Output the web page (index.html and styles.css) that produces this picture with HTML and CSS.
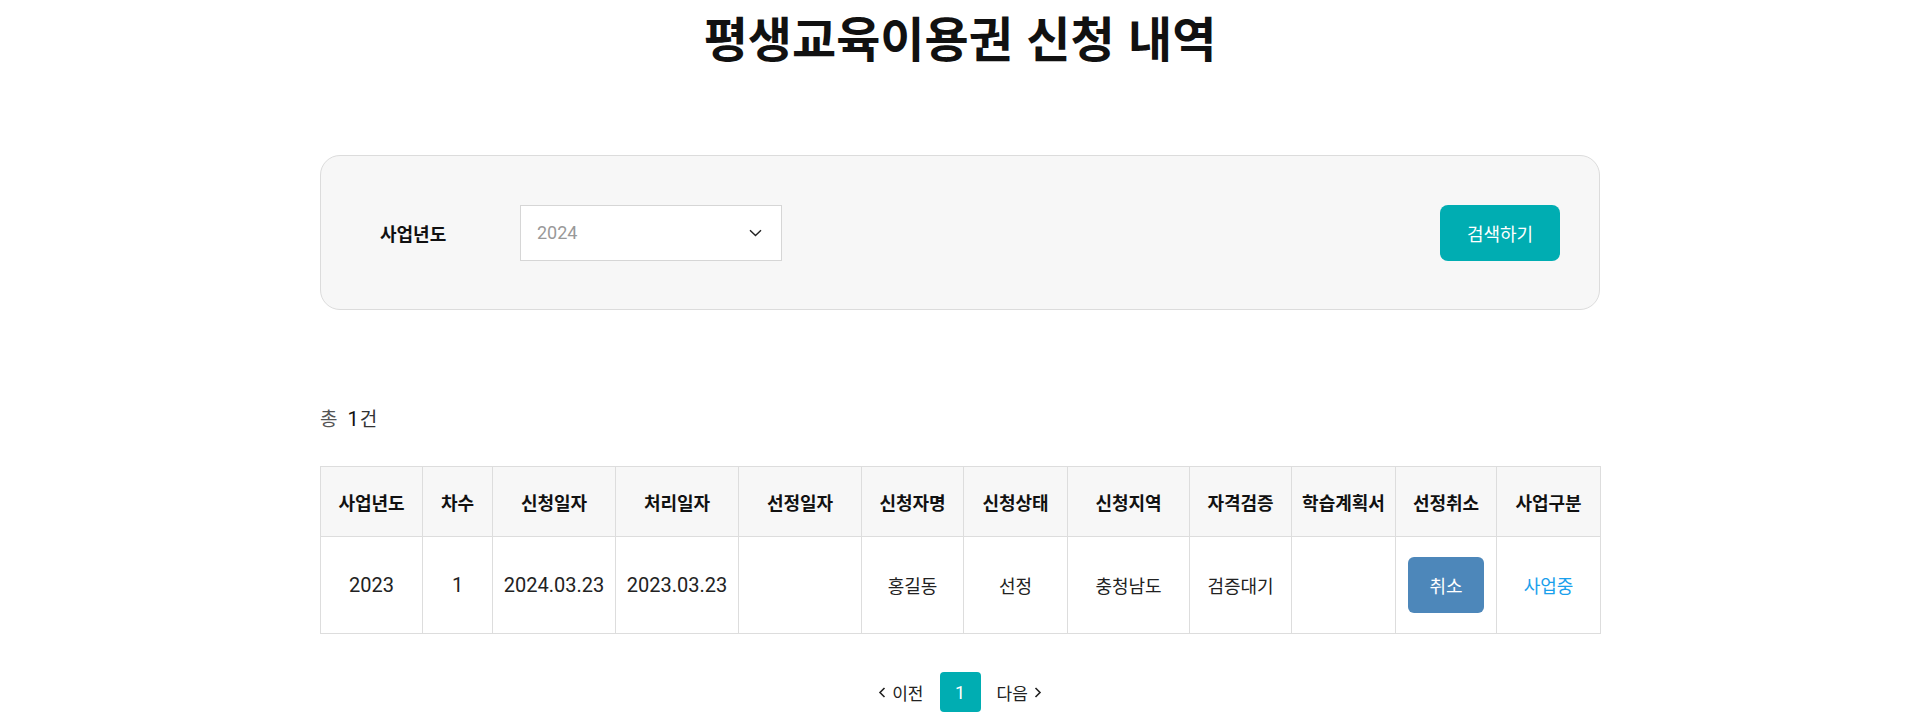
FILE: index.html
```html
<!DOCTYPE html>
<html lang="ko">
<head>
<meta charset="utf-8">
<title>평생교육이용권 신청 내역</title>
<link rel="stylesheet" href="styles.css">
</head>
<body>
<div class="page">
  <h1 class="title">평생교육이용권 신청 내역</h1>

  <div class="search-box">
    <label class="search-label">사업년도</label>
    <div class="select">
      <span class="select-value">2024</span>
      <svg class="chevron" width="13" height="8" viewBox="0 0 13 8"><path d="M1 1.2 L6.5 6.6 L12 1.2" fill="none" stroke="#222" stroke-width="1.4"/></svg>
    </div>
    <button class="search-btn">검색하기</button>
  </div>

  <div class="total">총<span class="total-count"><span class="total-num">1</span>건</span></div>

  <table class="list">
    <colgroup>
      <col style="width:102px"><col style="width:70px"><col style="width:123px"><col style="width:123px">
      <col style="width:123px"><col style="width:102px"><col style="width:104px"><col style="width:122px">
      <col style="width:102px"><col style="width:104px"><col style="width:101px"><col style="width:104px">
    </colgroup>
    <thead>
      <tr>
        <th>사업년도</th><th>차수</th><th>신청일자</th><th>처리일자</th><th>선정일자</th><th>신청자명</th>
        <th>신청상태</th><th>신청지역</th><th>자격검증</th><th>학습계획서</th><th>선정취소</th><th>사업구분</th>
      </tr>
    </thead>
    <tbody>
      <tr>
        <td class="num">2023</td><td class="num">1</td><td class="num">2024.03.23</td><td class="num">2023.03.23</td>
        <td></td><td>홍길동</td><td>선정</td><td>충청남도</td><td>검증대기</td><td></td>
        <td><button class="cancel-btn">취소</button></td>
        <td class="status">사업중</td>
      </tr>
    </tbody>
  </table>

  <div class="pager">
    <a class="pager-link"><svg width="8" height="11" viewBox="0 0 8 11"><path d="M6.5 1 L2 5.5 L6.5 10" fill="none" stroke="#222" stroke-width="1.6"/></svg>이전</a>
    <span class="pager-num">1</span>
    <a class="pager-link">다음<svg width="8" height="11" viewBox="0 0 8 11"><path d="M1.5 1 L6 5.5 L1.5 10" fill="none" stroke="#222" stroke-width="1.6"/></svg></a>
  </div>
</div>
</body>
</html>
```

FILE: styles.css
```css
* { box-sizing: border-box; }
html, body { margin: 0; padding: 0; background: #fff; }
body {
  font-family: Roboto, "Noto Sans CJK KR", "Noto Sans", sans-serif;
  color: #222;
}
.page {
  width: 1280px;
  margin: 0 auto;
}
.title {
  margin: 0;
  font-family: "Noto Sans CJK KR", sans-serif;
  font-size: 48px;
  font-weight: 700;
  line-height: 72px;
  text-align: center;
  color: #111;
}
.search-box {
  margin-top: 83px;
  height: 155px;
  border: 1px solid #dcdcdc;
  border-radius: 20px;
  background: #f7f7f7;
  display: flex;
  align-items: center;
  padding: 0 39px 0 59px;
}
.search-label {
  width: 140px;
  font-family: "Noto Sans CJK KR", sans-serif;
  font-size: 18px;
  font-weight: 700;
  color: #111;
}
.select {
  width: 262px;
  height: 56px;
  border: 1px solid #d6d6d6;
  background: #fff;
  display: flex;
  align-items: center;
  justify-content: space-between;
  padding: 0 19px 0 16px;
}
.select-value {
  font-size: 18px;
  color: #999;
}
.chevron { display: block; }
.search-btn {
  margin-left: auto;
  width: 120px;
  height: 56px;
  border: 0;
  border-radius: 8px;
  background: #00adb2;
  color: #fff;
  font-family: "Noto Sans CJK KR", sans-serif;
  font-size: 18px;
  cursor: pointer;
}
.total {
  margin-top: 95px;
  height: 26px;
  display: flex;
  align-items: center;
  font-family: "Noto Sans CJK KR", sans-serif;
  font-size: 19px;
  line-height: 26px;
  color: #555;
}
.total-count {
  margin-left: 10px;
  color: #333;
}
.total-num {
  font-family: Roboto, sans-serif;
  font-size: 20px;
  color: #111;
  margin-right: 1px;
}
.list {
  margin-top: 35px;
  width: 1280px;
  border-collapse: collapse;
  table-layout: fixed;
}
.list th, .list td {
  border: 1px solid #dddddd;
  text-align: center;
  padding: 0;
  font-family: "Noto Sans CJK KR", sans-serif;
}
.list th {
  height: 70px;
  background: #f7f7f7;
  font-size: 18px;
  font-weight: 700;
  color: #111;
}
.list td {
  height: 97px;
  font-size: 18px;
  color: #222;
}
.list td.num {
  font-family: Roboto, "Noto Sans CJK KR", sans-serif;
  font-size: 20px;
}
.list td.status { color: #1aa0ec; }
.cancel-btn {
  width: 76px;
  height: 56px;
  border: 0;
  border-radius: 6px;
  background: #4d87ba;
  color: #fff;
  font-family: "Noto Sans CJK KR", sans-serif;
  font-size: 18px;
  display: block;
  margin: 0 auto;
}
.pager {
  margin-top: 38px;
  display: flex;
  justify-content: center;
  align-items: center;
  gap: 16px;
}
.pager-link {
  display: flex;
  align-items: center;
  gap: 6px;
  font-family: "Noto Sans CJK KR", sans-serif;
  font-size: 17px;
  color: #222;
}
.pager-num {
  width: 41px;
  height: 40px;
  border-radius: 4px;
  background: #00adb2;
  color: #fff;
  font-size: 18px;
  display: flex;
  align-items: center;
  justify-content: center;
}
```
